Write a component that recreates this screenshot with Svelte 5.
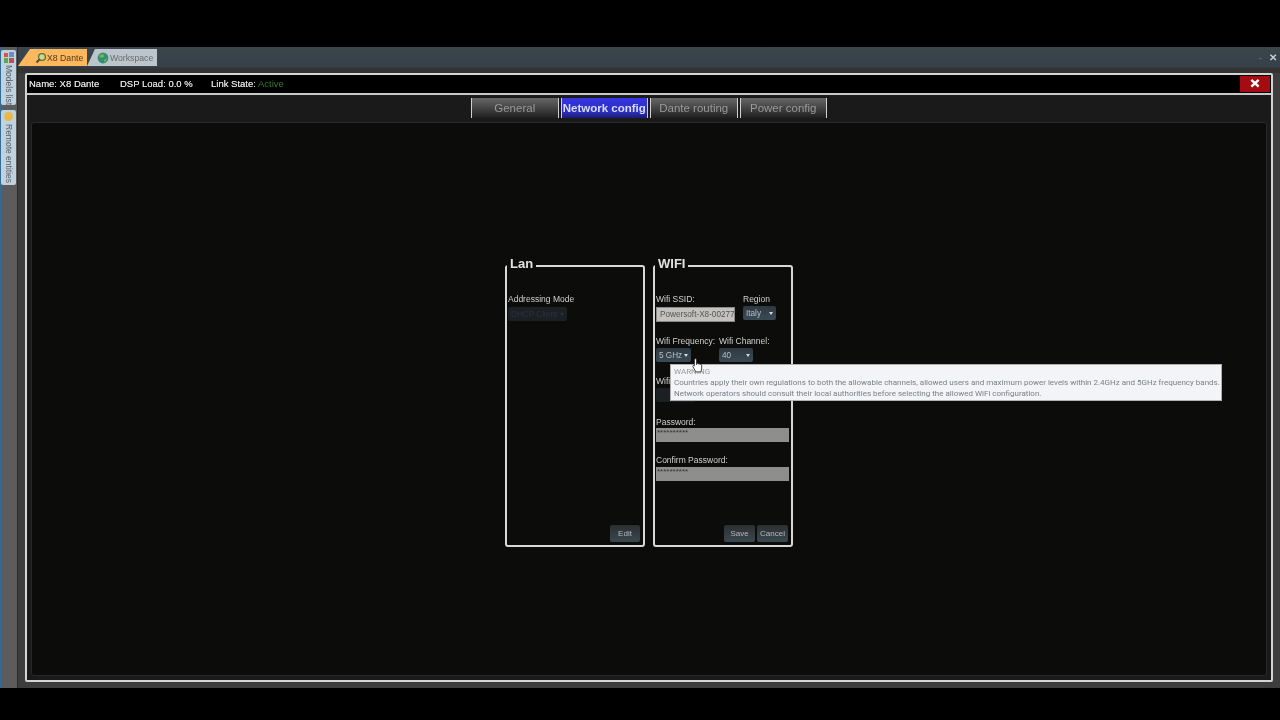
<script lang="ts">
  const tabs = ["General", "Network config", "Dante routing", "Power config"];
  let activeTab = $state("Network config");
</script>

<div class="screen">
  <div class="app">
    <aside class="side">
      <div class="side-tab models">
        <svg class="side-icon" viewBox="0 0 12 12" width="12" height="12">
          <rect x="1" y="1" width="4" height="4" fill="#d9534a" />
          <rect x="6" y="0" width="5" height="5" fill="#6a8fc4" />
          <rect x="1" y="6" width="4" height="5" fill="#5fa84f" />
          <rect x="6" y="6" width="5" height="5" fill="#c0504a" />
        </svg>
        <span class="side-label">Models list</span>
      </div>
      <div class="side-tab remote">
        <span class="side-dot"></span>
        <span class="side-label">Remote entities</span>
      </div>
    </aside>

    <div class="main">
      <div class="topbar">
        <div class="doc-tab doc-active">
          <svg viewBox="0 0 12 12" width="12" height="12">
            <circle cx="7" cy="5" r="3.4" fill="#d8d68a" stroke="#4f7a3f" stroke-width="1.4" />
            <path d="M4.6 7.4 1.5 10.5" stroke="#4a4a3a" stroke-width="2" />
          </svg>
          <span>X8 Dante</span>
        </div>
        <div class="doc-tab doc-idle">
          <svg viewBox="0 0 12 12" width="12" height="12">
            <circle cx="6" cy="6" r="5.4" fill="#2f8f7a" />
            <path d="M2 4c2-2 4-2 5-1s-1 3-3 3zM7 8l3-2-1 3-2 1z" fill="#7fb04a" />
          </svg>
          <span>Workspace</span>
        </div>
        <div class="win-ctl"><span class="min">-</span><span class="x">✕</span></div>
      </div>

      <div class="window">
        <header class="head">
          <span class="w1">Name: X8 Dante</span>
          <span class="w2">DSP Load: 0.0 %</span>
          <span>Link State: <em>Active</em></span>
          <button class="close" aria-label="Close">
            <svg viewBox="0 0 12 12" width="12" height="11">
              <path d="M2 2l8 7.5M10 2 2 9.5" stroke="#fff" stroke-width="2.6" />
            </svg>
          </button>
        </header>

        <nav class="tabs">
          {#each tabs as t}
            <button class="tab" class:on={activeTab === t} onclick={() => (activeTab = t)}>{t}</button>
          {/each}
        </nav>

        <section class="panel">
          <fieldset class="box">
            <legend>Lan</legend>
            <div class="lbl addr">Addressing Mode</div>
            <div class="select dhcp"><span>DHCP Client</span><i></i></div>
            <div class="actions"><button class="btn">Edit</button></div>
          </fieldset>

          <fieldset class="box">
            <legend>WIFI</legend>
            <div class="row r1">
              <div class="col ssid">
                <div class="lbl">Wifi SSID:</div>
                <div class="input">Powersoft-X8-00277</div>
              </div>
              <div class="col">
                <div class="lbl">Region</div>
                <div class="select region"><span>Italy</span><i></i></div>
              </div>
            </div>
            <div class="row r2">
              <div class="col freq">
                <div class="lbl">Wifi Frequency:</div>
                <div class="select f"><span>5 GHz</span><i></i></div>
              </div>
              <div class="col">
                <div class="lbl">Wifi Channel:</div>
                <div class="select c"><span>40</span><i></i></div>
              </div>
            </div>
            <div class="col r3">
              <div class="lbl">Wifi</div>
              <div class="select sec"></div>
            </div>
            <div class="col r4">
              <div class="lbl">Password:</div>
              <div class="pass">**********</div>
            </div>
            <div class="col r5">
              <div class="lbl">Confirm Password:</div>
              <div class="pass">**********</div>
            </div>
            <div class="actions">
              <button class="btn wide">Save</button>
              <button class="btn wide">Cancel</button>
            </div>
          </fieldset>
        </section>
      </div>
    </div>
  </div>

  <div class="tooltip">
    <div class="tt-head">WARNING</div>
    <div>Countries apply their own regulations to both the allowable channels, allowed users and maximum power levels within 2.4GHz and 5GHz frequency bands.</div>
    <div>Network operators should consult their local authorities before selecting the allowed WiFi configuration.</div>
  </div>

  <svg class="cursor" viewBox="0 0 12 16" width="11" height="15">
    <path d="M2.6 1.6c0-1.2 2.4-1.2 2.4 0V7l.2-.8c.5-.8 1.7-.6 1.8.3.4-.7 1.6-.5 1.7.4.5-.5 1.7-.3 1.8.7v4.2L9.800 15H4.200L1 9.200c-.4-1 .8-1.700 1.600-.8z" fill="#fff" stroke="#222" stroke-width=".9" />
  </svg>
</div>

<style>
  :global(body) {
    margin: 0;
    background: #000;
  }

  .screen {
    position: relative;
    width: 1280px;
    height: 720px;
    padding: 47px 0 32px;
    box-sizing: border-box;
    background: #000;
    font-family: "Liberation Sans", Arial, sans-serif;
    overflow: hidden;
    filter: blur(0.35px);
  }

  .app {
    display: flex;
    height: 641px;
    background: #3c3f41;
  }

  .side {
    width: 17px;
    background: linear-gradient(90deg, #2f6f9f 0, #4a6070 2px, #5c5c5c 3px);
    border-right: 1px solid #2a2a2a;
    display: flex;
    flex-direction: column;
    padding-top: 3px;
    gap: 5px;
  }

  .side-tab {
    width: 15px;
    margin-left: 1px;
    background: #bfd2e0;
    border-radius: 2px;
    box-sizing: border-box;
    display: flex;
    flex-direction: column;
    align-items: center;
    padding-top: 2px;
    gap: 1px;
  }

  .models { height: 55px; }
  .remote { height: 75px; gap: 3px; }

  .side-icon { flex: none; }

  .side-dot {
    width: 9px;
    height: 9px;
    border-radius: 50%;
    background: #eab84a;
    flex: none;
  }

  .side-label {
    writing-mode: vertical-rl;
    font-size: 8.5px;
    color: #5a5f63;
    white-space: nowrap;
  }

  .main {
    flex: 1;
    display: flex;
    flex-direction: column;
    background: #3d3d3d;
  }

  .topbar {
    height: 26px;
    box-sizing: border-box;
    padding: 2px 0 0 0;
    display: flex;
    background: linear-gradient(#3a464c, #36414a 20px, #333 21px);
    position: relative;
  }

  .doc-tab {
    height: 17px;
    display: flex;
    align-items: center;
    font-size: 8.7px;
    box-sizing: border-box;
  }

  .doc-active {
    width: 69px;
    padding-left: 17px;
    gap: 0;
    background: #fdb75c;
    color: #4a3a20;
    clip-path: polygon(12px 0, 100% 0, 100% 100%, 0 100%);
  }

  .doc-idle {
    width: 70px;
    padding-left: 10px;
    gap: 1px;
    background: #bcc5cb;
    color: #666c70;
    clip-path: polygon(8px 0, 100% 0, 100% 100%, 0 100%);
  }

  .win-ctl {
    margin-left: auto;
    padding-right: 3px;
    display: flex;
    gap: 7px;
    color: #c8d0d4;
    font-size: 10px;
    font-weight: bold;
    line-height: 18px;
  }

  .min { color: #566; }

  .window {
    margin-left: 7px;
    width: 1248px;
    height: 609px;
    box-sizing: border-box;
    border: 2px solid #d4d4d4;
    border-radius: 2px;
    background: #1a1a1a;
    display: flex;
    flex-direction: column;
  }

  .head {
    height: 20px;
    flex: none;
    box-sizing: border-box;
    background: #000;
    border-bottom: 2px solid #c8c8c8;
    display: flex;
    align-items: center;
    padding: 0 0 1px 2px;
    font-size: 9.5px;
    color: #dcdcdc;
    text-shadow: 0 0 0.6px #dcdcdc;
  }

  .w1 { width: 91px; }
  .w2 { width: 91px; }

  .head em {
    font-style: normal;
    color: #2f7a34;
    text-shadow: none;
  }

  .close {
    margin-left: auto;
    margin-right: 1px;
    width: 30px;
    height: 16px;
    border: 0;
    padding: 0;
    background: #a30d12;
    display: flex;
    align-items: center;
    justify-content: center;
  }

  .tabs {
    height: 27px;
    flex: none;
    display: flex;
    justify-content: center;
    gap: 2px;
    padding-top: 3px;
    box-sizing: border-box;
  }

  .tab {
    width: 87.5px;
    height: 20px;
    border: 0;
    border-left: 1px solid #d0d0d0;
    border-right: 1px solid #d0d0d0;
    padding: 0;
    background: linear-gradient(#666, #444 50%, #1e1e1e);
    color: #9a9a9a;
    font: 11.5px "Liberation Sans", Arial, sans-serif;
  }

  .tab.on {
    background: linear-gradient(#3535e0, #2d2dc0 70%, #1c1c70);
    color: #d8dcff;
    font-weight: bold;
    font-size: 11.5px;
    white-space: nowrap;
  }

  .panel {
    flex: 1;
    margin: 0 4px 4px;
    background: #0c0c0a;
    border: 1px solid #262a2c;
    border-radius: 3px;
    display: flex;
    justify-content: center;
    align-items: flex-start;
    gap: 8px;
    padding-top: 133px;
    box-sizing: border-box;
  }

  .box {
    width: 140px;
    height: 291px;
    margin: 0;
    padding: 0 0 0 1px;
    border: 2px solid #d8d8d8;
    border-radius: 3px;
    box-sizing: border-box;
    display: flex;
    flex-direction: column;
    position: relative;
    color: #d0d0d0;
  }

  legend {
    font-size: 13px;
    font-weight: bold;
    color: #e2e2e2;
    padding: 0 3px 4px;
    margin-left: -1px;
    line-height: 15px;
  }

  .lbl {
    font-size: 8.5px;
    line-height: 11px;
    color: #d0d0d0;
    white-space: nowrap;
  }

  .addr { margin-top: 19px; }

  .row { display: flex; }
  .col { display: flex; flex-direction: column; }

  .r1 { margin-top: 19px; }
  .r2 { margin-top: 14px; }
  .r3 { margin-top: 14px; }
  .r4 { margin-top: 15px; }
  .r5 { margin-top: 13px; }
  .r5 .pass { margin-top: 1px; }

  .ssid { width: 87px; }
  .freq { width: 63px; }

  .input {
    width: 79px;
    height: 15px;
    margin-top: 2px;
    box-sizing: border-box;
    padding-left: 3px;
    background: #c4c2be;
    border: 1px solid #8a8a8a;
    color: #555;
    font-size: 8.2px;
    line-height: 13px;
    overflow: hidden;
    white-space: nowrap;
  }

  .select {
    height: 14px;
    margin-top: 1px;
    box-sizing: border-box;
    padding: 0 3px;
    border-radius: 2px;
    background: linear-gradient(#2e3a42, #3a4a55);
    color: #b8bec2;
    font-size: 8.2px;
    display: flex;
    align-items: center;
    justify-content: space-between;
    white-space: nowrap;
  }

  .select i {
    width: 0;
    height: 0;
    border: 2.5px solid transparent;
    border-top: 3px solid #d8d8d8;
    border-bottom: 0;
  }

  .dhcp {
    width: 59px;
    margin-top: 2px;
    background: #1a2024;
    color: #2d3338;
  }

  .dhcp i { border-top-color: #2d3338; }

  .region { width: 33px; }
  .f { width: 35px; }
  .c { width: 34px; }
  .sec { width: 40px; background: #1a2024; }

  .pass {
    width: 133px;
    height: 14px;
    box-sizing: border-box;
    padding-left: 1px;
    background: #8e8e8c;
    color: #333;
    font-size: 8px;
    line-height: 10px;
  }

  .actions {
    margin-top: auto;
    margin-bottom: 3px;
    margin-right: 3px;
    display: flex;
    justify-content: flex-end;
    gap: 2px;
  }

  .btn {
    width: 30px;
    height: 17px;
    padding: 0;
    border: 0;
    border-radius: 2px;
    background: linear-gradient(#2c2f31, #3a4850);
    color: #b5babd;
    font: 8px "Liberation Sans", Arial, sans-serif;
  }

  .btn.wide { width: 31px; }

  .tooltip {
    position: absolute;
    left: 670px;
    top: 364px;
    width: 552px;
    height: 37px;
    box-sizing: border-box;
    padding: 1px 3px;
    background: #f2f4f8;
    border: 1px solid #b0b0b0;
    color: #7a7e84;
    font: 8px/11px Roboto, "Liberation Sans", sans-serif;
    white-space: nowrap;
  }

  .tt-head { color: #9a9a9a; }

  .cursor {
    position: absolute;
    left: 692px;
    top: 358px;
  }
</style>
